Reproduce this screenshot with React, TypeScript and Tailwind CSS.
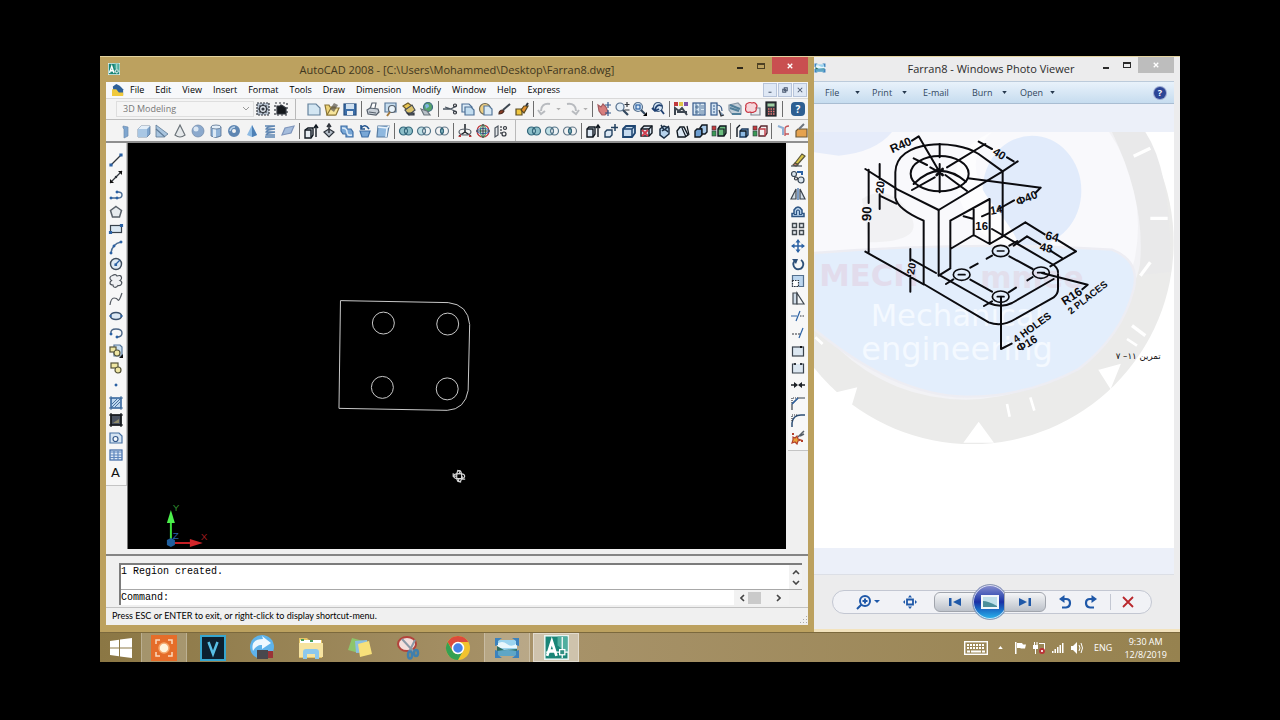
import type { ReactNode } from "react";

const ink = "#30353c";
const blue = "#2c62a4";
const pale = "#bcd6ef";

type Item = string;

function Svg({ children, size = "size-4" }: { children: ReactNode; size?: string }) {
  return (
    <svg viewBox="0 0 16 16" className={`${size} shrink-0`} fill="none" stroke={ink} strokeWidth="1.2" aria-hidden="true">
      {children}
    </svg>
  );
}

const cube = (
  <>
    <path d="M2 6 L5 3 H14 V11 L11 14 H2Z" fill="#7fa6cf" stroke="#55708f" strokeWidth=".7" />
    <path d="M2 6 H11 V14 H2Z" fill="#a9c7e4" stroke="none" />
    <path d="M2 6 L5 3 H14 L11 6Z" fill="#e3eef8" stroke="none" />
  </>
);
const faceCube = (
  <>
    <path d="M2 6 L5 3 H13 V10 L10 13 H2Z" fill="#dce8f4" stroke="#101820" strokeWidth="1.4" />
    <path d="M2 6 H10 V13 M10 6 L13 3" stroke="#101820" strokeWidth="1.4" />
  </>
);

const art: Record<string, ReactNode> = {
  "Workspace settings": (
    <>
      <rect x="2" y="2" width="12" height="12" fill="#b9c4d1" strokeDasharray="2 1" />
      <circle cx="8" cy="8" r="3.5" fill="#dfe6ee" />
      <circle cx="8" cy="8" r="1" fill={ink} />
      <path d="M8 3v2M8 11v2M3 8h2M11 8h2M4.500 4.500l1 1M10.500 10.500l1 1M11.500 4.500l-1 1M5.500 10.500l-1 1" />
    </>
  ),
  "My workspace": (
    <>
      <rect x="2" y="2" width="12" height="12" strokeDasharray="2 2" />
      <path d="M4 13V5h3l1-1 2 1 3 2v6Z" fill="#15181c" />
    </>
  ),
  New: <path d="M2 3h8l4 4v7H2Z" fill="#d3e6f2" stroke="#65829c" />,
  Open: (
    <>
      <path d="M1 4h4l1 2h5v8H3Z" fill="#eed477" stroke="#8a7434" />
      <path d="M3 14 7 7h8l-3 7Z" fill="#f7e59c" stroke="#8a7434" />
      <path d="M6 8 10 2l4 2-4 7Z" fill="#5a564c" stroke="none" opacity=".7" />
    </>
  ),
  Save: (
    <>
      <rect x="2" y="3" width="12" height="11" fill="#3c6ea8" stroke="#274f80" />
      <rect x="4" y="3" width="8" height="5" fill="#cfe0f0" stroke="none" />
      <rect x="5" y="10" width="6" height="4" fill="#e8eef4" stroke="none" />
    </>
  ),
  Plot: (
    <>
      <path d="M5 8 7 2h4l-1 5" fill="#fff" stroke="#56606c" />
      <path d="M2 9l3-2 8 1 1 3-3 3-8-1Z" fill="#c9d0d8" stroke="#56606c" />
      <path d="M4 11l7 1" stroke="#56606c" />
    </>
  ),
  "Plot preview": (
    <>
      <path d="M2 2h11v9H2Z" fill="#c8deef" stroke="#56779a" />
      <circle cx="9" cy="8" r="3.500" fill="#eaf4fb" stroke="#56606c" />
      <path d="M7 11 4 15" stroke="#a2793d" strokeWidth="2" />
    </>
  ),
  Publish: (
    <>
      <path d="M2 5l5-3 4 3-5 4Z" fill="#e9c552" stroke="#6d5b2a" />
      <path d="M4 9 11 4l3 5-6 5Z" fill="#d9c16a" stroke="#4a4f55" />
      <path d="M6 12h7v2H8Z" fill="#56606c" />
    </>
  ),
  "3D DWF": (
    <>
      <circle cx="9" cy="6" r="4.500" fill="#56a36c" stroke="#3d6a83" />
      <path d="M6 4c2-2 4-1 4 1s-2 1-3 3Z" fill="#7fb5e4" stroke="none" />
      <path d="M2 8l6 2 3 4H5Z" fill="#b8c1c8" stroke="#6b747c" />
    </>
  ),
  Cut: (
    <>
      <path d="M1 8h8M9 8l5-3M9 8l5 3M3 6l6 2" stroke="#4b5560" strokeWidth="1.300" />
      <circle cx="13" cy="4.500" r="1.500" />
      <circle cx="13" cy="11.500" r="1.500" />
    </>
  ),
  Copy: (
    <>
      <path d="M2 3h7l3 3v5H2Z" fill="#dcebf6" stroke="#4e7197" />
      <path d="M5 6h6l3 3v5H5Z" fill="#c1dcef" stroke="#4e7197" />
    </>
  ),
  Paste: (
    <>
      <circle cx="7" cy="8" r="5.500" fill="#efcf82" stroke="#6d6650" />
      <path d="M6 5h5l3 3v6H6Z" fill="#d9e9f4" stroke="#56779a" />
    </>
  ),
  "Match properties": (
    <>
      <path d="M3 13c0-3 2-4 4-4l1 1c-1 2-2 3-5 3Z" fill="#8c3d25" stroke="#4b2a1e" />
      <path d="M7 9 14 3" stroke="#3d4650" strokeWidth="2" />
    </>
  ),
  "Block editor": (
    <>
      <path d="M2 8h6v6H2Z" fill="#f0c740" stroke="#5a4a20" />
      <path d="M7 9 10 5h4l-4 7Z" fill="#e4912f" stroke="#5a4a20" />
      <path d="M12 5l2-3" strokeWidth="2" />
    </>
  ),
  Undo: <path d="M13 3C7 2 4 5 4 10M1 9l3 4 4-3" stroke="#b8bbbf" strokeWidth="2" />,
  Redo: <path d="M3 3c6-1 9 2 9 7M15 9l-3 4-4-3" stroke="#b8bbbf" strokeWidth="2" />,
  "Pan realtime": (
    <>
      <path d="M2 4l3 2 2-3 3 3 2 5-3 3H6L3 10Z" fill="#d77e7d" stroke="#a35a5e" />
      <path d="M12 1v6M9 4h6M12 9v6M9 12h6" stroke="#35598a" />
    </>
  ),
  "Zoom realtime": (
    <>
      <circle cx="6" cy="6" r="4" fill="#e4eff8" stroke="#58728f" />
      <path d="M9 9l5 5" stroke="#33485f" strokeWidth="2.200" />
      <path d="M13 1v5M10.500 3.500h5M10.500 9h5" stroke="#30353c" />
    </>
  ),
  "Zoom window": (
    <>
      <circle cx="6" cy="6" r="4.500" fill="#d4e5f4" stroke="#58728f" />
      <rect x="4" y="4" width="4" height="4" stroke={blue} />
      <path d="M9 9l4 4" stroke="#33485f" strokeWidth="2.200" />
      <path d="M11 15h4v-4Z" fill="#000" stroke="none" />
    </>
  ),
  "Zoom previous": (
    <>
      <circle cx="8" cy="6" r="4.500" fill="#d4e5f4" stroke="#3a577a" />
      <path d="M11 9l3 4M12 5C8 3 6 5 5 9M2 7l3 3 4-2" stroke="#1e3f70" strokeWidth="1.800" />
    </>
  ),
  Properties: (
    <>
      <rect x="1" y="1" width="4" height="4" fill="#c2393c" stroke="none" />
      <rect x="6" y="1" width="4" height="4" fill="#dfc449" stroke="none" />
      <rect x="11" y="1" width="4" height="4" fill="#7e4fa6" stroke="none" />
      <path d="M2 14V7l4 3 3-3 5 7M4 11h10" stroke="#3d4650" strokeWidth="2" />
    </>
  ),
  DesignCenter: (
    <>
      <rect x="2" y="2" width="12" height="12" fill="#d9e8f4" stroke="#35598a" />
      <path d="M5 2v12M9 2v12M5 5h2v2H5ZM10 5h3M10 7h3M5 10h2v2H5ZM10 10h3M10 12h3" stroke="#4b6d94" strokeWidth=".9" />
    </>
  ),
  "Tool palettes": (
    <>
      <rect x="2" y="2" width="6" height="12" fill="#cfe0f0" stroke="#35598a" />
      <path d="M4 5h2M4 8h2M4 11h2M8 4c4 0 5 3 5 6" stroke="#35598a" />
      <path d="M10 9l2 6 3-1" fill="#7f98b4" stroke="#30353c" />
    </>
  ),
  "Sheet set manager": (
    <>
      <path d="M2 4l9-2 3 3v8H5L2 9Z" fill="#c2cfd9" stroke="#8a99a7" />
      <path d="M3 7l9 3M3 4l10 4M5 13h9" stroke="#507f9a" strokeWidth="2" />
    </>
  ),
  "Markup set manager": (
    <>
      <path d="M6 7h9v7H6Z" fill="#e8ebee" stroke="#7c858f" />
      <path d="M3 2q2-1 4 0 3-1 4 1 2 2 0 4 1 3-2 4-2 1-4 0-3 1-4-1-1-2 0-4-1-3 2-4Z" fill="#f7d6da" stroke="#c8323f" />
    </>
  ),
  QuickCalc: (
    <>
      <rect x="3" y="1" width="10" height="14" fill="#35393f" stroke="#1d2024" />
      <rect x="4.500" y="2.500" width="7" height="3" fill="#9fd0a3" stroke="none" />
      <path d="M5 8h7M5 10.500h7M5 13h7" stroke="#e87573" strokeWidth="1.300" strokeDasharray="1.500 1" />
    </>
  ),
  Box: cube,
  Polysolid: <path d="M5 3l5 1v9l-4 2V6L5 5Z" fill="#7fa6cf" stroke="#6d8db0" strokeWidth=".7" />,
  Wedge: (
    <>
      <path d="M2 2l12 9-4 3H2Z" fill="#a9c5df" stroke="#5e7a96" strokeWidth=".8" />
      <path d="M2 6l9 8" stroke="#5e7a96" />
    </>
  ),
  Cone: <path d="M8 2 13 12q-5 4-10 0Z" fill="#e5e8ea" stroke="#6a7278" />,
  Sphere: (
    <>
      <circle cx="8" cy="8" r="6" fill="#8ba9cd" stroke="#6f87a6" strokeWidth=".7" />
      <circle cx="6" cy="6" r="2.500" fill="#dbe7f3" stroke="none" />
    </>
  ),
  Cylinder: (
    <>
      <path d="M3 4v9q5 3 10 0V4Z" fill="#8fb2d7" stroke="#55708f" strokeWidth=".8" />
      <path d="M5 5v9h3V5Z" fill="#dce9f5" stroke="none" />
      <ellipse cx="8" cy="4" rx="5" ry="2" fill="#e3eef8" stroke="#55708f" strokeWidth=".8" />
    </>
  ),
  Torus: (
    <>
      <circle cx="8" cy="8" r="4" stroke="#5f86b2" strokeWidth="4" />
      <path d="M4 8q1-4 5-4" stroke="#b9d2ea" strokeWidth="1.500" />
    </>
  ),
  Pyramid: (
    <>
      <path d="M8 2 13 12 8 14 3 12Z" fill="#8ebbe3" stroke="none" />
      <path d="M8 2v12l5-2Z" fill="#4d80b6" stroke="none" />
    </>
  ),
  Helix: <path d="M3 3h10q-9 1-9 3h9q-9 1-9 3h9q-9 1-9 3h9M3 14h10" stroke="#5f86b2" strokeWidth="1.300" />,
  "Planar surface": <path d="M2 12 5 5l9-2-3 7Z" fill="#a5bddd" stroke="#7f95bb" />,
  Extrude: (
    <>
      <path d="M2 7l3-2h5v7l-2 3H2Z" fill="#e5ebf1" stroke="#101820" strokeWidth="1.400" />
      <path d="M2 7h6v7M13 14V3M11 5l2-3 2 3" stroke="#101820" strokeWidth="1.400" />
    </>
  ),
  Presspull: (
    <>
      <path d="M3 9l5-3 5 3-5 5Z" fill="#b5bec8" stroke="#2c333b" />
      <path d="M8 10V2M6 4l2-3 2 3" strokeWidth="1.500" />
    </>
  ),
  Sweep: (
    <>
      <path d="M2 3h6v3h4l2 3v5H7v-3H4L2 8Z" fill="#79a7d6" stroke="#3f6fa6" />
      <path d="M3 5q5 0 5 4t5 3" stroke="#dcebf8" strokeWidth="1.500" />
    </>
  ),
  Revolve: (
    <>
      <path d="M3 8h10l-2 6H5Z" fill="#79a7d6" stroke="#3f6fa6" />
      <path d="M12 6Q8 0 4 5M4 2v4h4" stroke="#24558f" strokeWidth="1.600" />
    </>
  ),
  Loft: (
    <>
      <path d="M3 3h11l-2 11H2Z" fill="#8fb8df" stroke="#5a7da1" />
      <path d="M3 4l9 1 2-2M12 5l-1 9" stroke="#eaf3fb" strokeWidth="1.500" />
    </>
  ),
  Union: (
    <>
      <circle cx="5.500" cy="8" r="4" fill="#8dbfc9" stroke="#33677b" />
      <circle cx="10.500" cy="8" r="4" fill="#8dbfc9" stroke="#33677b" />
      <path d="M8 5q-3 3 0 6 3-3 0-6Z" fill="#b7dbe1" stroke="#33677b" />
    </>
  ),
  Subtract: (
    <>
      <circle cx="10.500" cy="8" r="4" fill="#eef2f4" stroke="#527488" />
      <circle cx="5.500" cy="8" r="4" fill="#bfe0e6" stroke="#527488" />
      <path d="M8 5q-3 3 0 6 3-3 0-6Z" fill="#f4f6f7" stroke="#527488" />
    </>
  ),
  Intersect: (
    <>
      <circle cx="5.500" cy="8" r="4" stroke="#64798a" />
      <circle cx="10.500" cy="8" r="4" stroke="#64798a" />
      <path d="M8 5q-3 3 0 6 3-3 0-6Z" fill="#8dbfc9" stroke="#33677b" />
    </>
  ),
  "3D move": (
    <>
      <path d="M8 9V1M8 9l6 4M8 9l-6 4" stroke="#1d2228" strokeWidth="1.500" />
      <ellipse cx="8" cy="9" rx="6" ry="3" stroke="#555d66" />
      <path d="M1 14l3-3v3ZM15 14l-3-3v3Z" fill="#c2393c" stroke="none" />
    </>
  ),
  "3D rotate": (
    <>
      <circle cx="8" cy="8" r="6" stroke="#c2393c" />
      <ellipse cx="8" cy="8" rx="2.500" ry="6" stroke="#3a9a56" />
      <ellipse cx="8" cy="8" rx="6" ry="2.500" stroke="#3563a5" />
      <path d="M8 1v14M1 8h14" stroke="#40474f" />
    </>
  ),
  "3D align": (
    <>
      <path d="M2 5l3-2v9l-3 2Z" fill="#e4e7ea" stroke="#4d555e" />
      <circle cx="12" cy="5" r="1.500" />
      <circle cx="11" cy="11" r="2" />
      <path d="M8 3v9" strokeDasharray="2 1" />
    </>
  ),
  "Extrude faces": (
    <>
      <path d="M2 6l2-2h6v7l-2 3H2Z" fill="#dce8f4" stroke="#101820" strokeWidth="1.400" />
      <path d="M2 6h6v8M13 14V3M11 5l2-3 2 3" stroke="#101820" strokeWidth="1.400" />
    </>
  ),
  "Move faces": (
    <>
      <path d="M2 9l2-2h5v5l-2 2H2Z" fill="#dce8f4" stroke="#22405f" strokeWidth="1.400" />
      <path d="M12 1v7M8 4.500h7" stroke="#22405f" strokeWidth="1.500" />
    </>
  ),
  "Offset faces": (
    <>
      <path d="M2 6L5 3 H14 V10 L11 14 H2Z" fill="#c6dbef" stroke="#1f4672" strokeWidth="1.800" />
      <path d="M2 6 H11 V14M11 6l3-3" stroke="#1f4672" strokeWidth="1.500" />
    </>
  ),
  "Delete faces": (
    <>
      {faceCube}
      <path d="M3 7l6 6M9 7l-6 6" stroke="#d23b4b" strokeWidth="1.800" />
    </>
  ),
  "Rotate faces": (
    <>
      <path d="M3 6l4-3 5 2v6l-5 4-4-3Z" fill="#b6d2ec" stroke="#1b2f45" strokeWidth="1.500" />
      <path d="M5 8q3-3 6 1M4 2l3 5 5-4" stroke="#1b2f45" strokeWidth="1.500" />
    </>
  ),
  "Taper faces": (
    <>
      <path d="M2 8l3-4h4l4 8-3 2H3Z" fill="#dce8f4" stroke="#101820" strokeWidth="1.400" />
      <path d="M7 5l4 9M12 3l2 9" stroke="#101820" />
    </>
  ),
  "Copy faces": (
    <>
      <path d="M2 8l2-2h5v6l-2 2H2Z" fill="#6d9ed1" stroke="#101820" strokeWidth="1.400" />
      <path d="M7 5l2-3h5v7l-2 2H9V6Z" fill="#a8c9e8" stroke="#101820" strokeWidth="1.400" />
    </>
  ),
  "Color faces": (
    <>
      <rect x="1" y="3" width="4" height="4" fill="#c2393c" stroke={ink} strokeWidth=".6" />
      <rect x="1" y="8" width="4" height="5" fill="#3a9a56" stroke={ink} strokeWidth=".6" />
      <path d="M7 6l2-3h6v7l-2 3H7Z" fill="#6bbd7e" stroke="#101820" strokeWidth="1.400" />
      <path d="M7 6h6v7" stroke="#101820" />
    </>
  ),
  "Copy edges": (
    <>
      <path d="M6 8l2-2h6v6l-2 2H6Z" fill="#8db9e2" stroke="#1d3a5c" strokeWidth="1.400" />
      <path d="M3 14V5l3-3M6 8h6v6" stroke="#101820" strokeWidth="1.400" />
    </>
  ),
  "Color edges": (
    <>
      <rect x="1" y="3" width="4" height="4" fill="#c2393c" stroke={ink} strokeWidth=".6" />
      <rect x="1" y="8" width="4" height="5" fill="#3a9a56" stroke={ink} strokeWidth=".6" />
      <path d="M7 6l2-3h6v7l-2 3H7Z" fill="#f4eff0" stroke="#5a2a30" strokeWidth="1.400" />
      <path d="M7 6h6v7" stroke="#c23b46" strokeWidth="1.400" />
    </>
  ),
  Imprint: (
    <>
      <path d="M3 3l5 2v7" stroke="#8eb0d4" strokeWidth="2" />
      <path d="M14 3q-4 0-4 3v7M10 11h4" stroke="#c2565a" strokeWidth="1.300" />
    </>
  ),
  Clean: (
    <>
      <path d="M3 8l2-2h9v8H3Z" fill="#e5a24e" stroke="#6d5a3a" />
      <path d="M6 6l5-5" stroke="#6d747c" strokeWidth="2" />
    </>
  ),
  Line: (
    <>
      <path d="M3 13 13 3" stroke={ink} />
      <path d="M2 12h2v2H2ZM12 2h2v2h-2Z" fill={blue} stroke={blue} />
    </>
  ),
  "Construction line": (
    <>
      <path d="M2 14 14 2" />
      <path d="M2 14v-4l4 4ZM14 2v4l-4-4Z" fill="#111" stroke="none" />
      <path d="M7.500 7.500h1v1h-1Z" fill="#111" />
    </>
  ),
  Polyline: (
    <>
      <path d="M3 12h7q4 0 4-3t-4-3" stroke="#4b6d94" strokeWidth="1.400" />
      <path d="M2 11h2v2H2ZM8 11h2v2H8ZM8 5h2v2H8Z" fill={blue} stroke={blue} strokeWidth=".6" />
    </>
  ),
  Polygon: <path d="M8 2.500l5.500 4-2 6.500h-7l-2-6.500Z" fill="#e7ebee" stroke="#59616a" strokeWidth="1.500" />,
  Rectangle: (
    <>
      <rect x="2.500" y="4.500" width="11" height="7" fill="#dbe8f3" stroke="#39424c" />
      <path d="M1.500 10.500h2v2h-2ZM12.500 3.500h2v2h-2Z" fill={blue} stroke={blue} />
    </>
  ),
  Arc: (
    <>
      <path d="M3 14Q4 5 13 3" stroke="#4b6d94" strokeWidth="1.400" />
      <path d="M2 13h2v2H2ZM5 6h2v2H5ZM12 2h2v2h-2Z" fill={blue} stroke={blue} strokeWidth=".6" />
    </>
  ),
  Circle: (
    <>
      <circle cx="8" cy="8" r="5.500" fill="#dfeaf4" stroke="#3e4c5c" strokeWidth="1.400" />
      <path d="M7.500 8.500 12 4" stroke={blue} />
      <path d="M7 8h1.500v1.500H7Z" fill={blue} stroke={blue} />
    </>
  ),
  "Revision cloud": (
    <path
      d="M4.500 2.500q3-2 4.500.5 4-1.500 4.500 1.500.5 2-1.500 3 2.500 1 1.500 3.500-1 2-3.500 1.500-1.500 2.500-4 1.500-1-.500-1-2-3 0-3-2 0-1.500 1.500-2.500-2-1-1.500-3 .5-1.500 2.500-2Z"
      fill="#f0f1f3"
      stroke="#4d535b"
    />
  ),
  Spline: <path d="M2 14q1-7 4-7t4 2 4-7" stroke="#555b63" />,
  Ellipse: (
    <>
      <ellipse cx="8" cy="8" rx="5.500" ry="3.500" fill="#dbe8f3" stroke="#39506c" strokeWidth="1.600" />
      <path d="M1.500 7h2v2h-2ZM12.500 7h2v2h-2Z" fill={blue} stroke="none" />
    </>
  ),
  "Ellipse arc": (
    <>
      <path d="M3 9q-1-5 5-5t6 4-5 4" stroke="#4c6686" strokeWidth="1.400" />
      <path d="M2 8h2v2H2ZM8 11h2v2H8Z" fill={blue} stroke={blue} strokeWidth=".6" />
    </>
  ),
  "Insert block": (
    <>
      <path d="M6 2h6l2 2v9H6Z" fill="#cbdff0" stroke="#56779a" />
      <rect x="2" y="4" width="6" height="5" fill="#efe6a2" stroke="#565438" />
      <circle cx="9" cy="10" r="3" fill="#efe6a2" stroke="#565438" />
      <path d="M11 15h4v-4Z" fill="#111" stroke="none" />
    </>
  ),
  "Make block": (
    <>
      <rect x="3" y="3" width="7" height="5" fill="#efe6a2" stroke="#565438" />
      <circle cx="10" cy="10" r="3" fill="#efe6a2" stroke="#565438" />
    </>
  ),
  Point: <path d="M7 7h2v2H7Z" fill={blue} stroke={blue} strokeWidth=".6" />,
  Hatch: (
    <>
      <rect x="3" y="3" width="10" height="10" fill={pale} stroke={blue} />
      <path d="M1 3h14M1 13h14M3 1v14M13 1v14M4 9l5-5M4 12l8-8M7 12l5-5" stroke="#3b6696" strokeWidth=".9" />
    </>
  ),
  Gradient: (
    <>
      <rect x="3" y="3" width="10" height="10" fill="#4a5260" stroke="#16191d" strokeWidth="1.500" />
      <path d="M1 3h14M1 13h14M3 1v14M13 1v14" stroke="#16191d" />
      <path d="M5 11h6V7Z" fill="#8f8b6b" stroke="none" />
    </>
  ),
  Region: (
    <>
      <path d="M2 3h9l3 3v7H2Z" fill="#d5e4f2" stroke="#4972a4" />
      <circle cx="7.500" cy="9" r="2.500" fill="#f5f9fc" stroke="#35598a" />
    </>
  ),
  Table: (
    <>
      <rect x="2" y="3" width="12" height="10" fill="#dce8f6" stroke="#3d68a5" />
      <path d="M2 5h12M2 8h12M2 10.500h12M6 4v9M10 4v9" stroke="#5e86bd" />
    </>
  ),
  Erase: (
    <>
      <path d="M5 11 12 2l3 2-7 8Z" fill="#d8c64a" stroke="#5b563a" />
      <path d="M5 11l3 2-2 1-3-1Z" fill="#d67b7b" stroke="#5b563a" />
      <path d="M1 14h11" stroke="#494f57" />
    </>
  ),
  "Copy object": (
    <>
      <circle cx="4" cy="5" r="2.500" fill="#dbe6ef" stroke="#3a4755" />
      <circle cx="11" cy="11" r="3" fill="#dbe6ef" stroke="#3a4755" />
      <circle cx="6" cy="9.500" r="1.500" />
      <path d="M7 3h5v3" stroke={blue} strokeWidth="2" />
    </>
  ),
  Mirror: (
    <>
      <path d="M6 3v10H1ZM10 3v10h5Z" fill="#d2dde7" stroke="#3c444d" />
      <path d="M8 2v12" stroke={blue} />
    </>
  ),
  Offset: (
    <>
      <path d="M2 12.500v-3h2V6q4-6 8 0v3.500h2v3Z" fill={pale} stroke="#2c5482" strokeWidth="1.500" />
      <path d="M4 10.500h2.500V7q1.500-2 3 0v3.500H12" stroke="#2c5482" />
    </>
  ),
  Array: <path d="M2.500 2.500h4v4h-4ZM9.500 2.500h4v4h-4ZM2.500 9.500h4v4h-4ZM9.500 9.500h4v4h-4Z" fill="#e8edf1" stroke="#42494f" strokeWidth="1.400" />,
  Move: (
    <>
      <path d="M8 2v12M2 8h12" stroke={blue} strokeWidth="1.500" />
      <path d="M8 1l2.500 3.500h-5ZM8 15l2.500-3.500h-5ZM1 8l3.500-2.500v5ZM15 8l-3.500-2.500v5Z" fill={blue} stroke="none" />
    </>
  ),
  Rotate: (
    <>
      <path d="M4.500 5A5 5 0 1 0 11 4" stroke="#2d4f78" strokeWidth="1.900" />
      <path d="M2 3h6L6 8Z" fill="#2d4f78" stroke="none" />
    </>
  ),
  Scale: (
    <>
      <path d="M2.500 2.500h11v11h-11Z" fill={pale} stroke="#54708f" />
      <path d="M2.500 7.500h6v6h-6Z" fill="#fff" strokeDasharray="1.500 1" />
    </>
  ),
  Stretch: (
    <>
      <path d="M3 3h4v11H3Z" fill="#cfdce8" stroke="#3f474f" />
      <path d="M7 3l7 11H7Z" fill="#f2f5f7" stroke="#3f474f" />
    </>
  ),
  Trim: (
    <>
      <path d="M1 8h6M10 3 6 13" stroke={blue} />
      <path d="M10 8h5" strokeDasharray="1.500 1" />
    </>
  ),
  Extend: (
    <>
      <path d="M2 9h8" strokeDasharray="2 1" />
      <path d="M13 3 9 13" stroke={blue} />
    </>
  ),
  "Break at point": (
    <>
      <rect x="2.500" y="4" width="11" height="9" fill="#dce7f1" stroke="#39424c" />
      <path d="M10 3h2v2h-2Z" fill="#111" stroke="none" />
    </>
  ),
  Break: (
    <>
      <path d="M5 4H2.500v9h11V4H11" fill="#dce7f1" stroke="#39424c" />
      <path d="M4 3h2v2H4ZM10 3h2v2h-2Z" fill={ink} stroke="none" />
    </>
  ),
  Join: (
    <>
      <path d="M1 8h4M11 8h4" stroke="#1c2025" strokeWidth="1.500" />
      <path d="M4 5l4 3-4 3ZM12 5 8 8l4 3Z" fill="#1c2025" stroke="none" />
    </>
  ),
  Chamfer: (
    <>
      <path d="M2 15V9l6-6h7" stroke="#39424c" />
      <path d="M2 8V3h6" strokeDasharray="1 1" />
      <path d="M2 9l6-6" stroke={blue} strokeWidth="1.500" />
    </>
  ),
  Fillet: (
    <>
      <path d="M2 15v-4q1-8 9-8h4" stroke="#2c4d74" strokeWidth="1.500" />
      <path d="M2 9V3h6" strokeDasharray="1 1" />
    </>
  ),
  Explode: (
    <>
      <path d="M3 8l2 1 2-2 1 3 3 1-3 1-1 3-2-2-3 1 1-3Z" fill="#e9a23a" stroke="#b4402b" />
      <path d="M8 8l6-6M10 7l4-2" stroke="#58606a" strokeWidth="1.500" />
      <path d="M2 4h2v2H2ZM11 11h2v2h-2Z" fill="#b4402b" stroke="none" />
    </>
  ),
};

function Tool({ name, className = "w-[18px]" }: { name: string; className?: string }) {
  return (
    <button type="button" aria-label={name} title={name} className={`flex h-full shrink-0 items-center justify-center ${className}`}>
      {name === "Multiline text" ? <span className="font-['DejaVu_Sans'] text-[13px] leading-none text-[#111]">A</span> : <Svg>{art[name]}</Svg>}
    </button>
  );
}

function ToolRow({ items }: { items: Item[] }) {
  return (
    <>
      {items.map((name, i) => {
        if (name === "|") return <span key={i} className="mx-[2px] h-4 w-px shrink-0 bg-[#6d6d6d]" />;
        if (name === "||") return <span key={i} className="ml-[5px] mr-[9px] h-full w-px shrink-0 bg-[#b9b9b9]" />;
        if (name === "v")
          return (
            <button key={i} type="button" aria-label="History" className="flex w-[9px] shrink-0 justify-center text-[#b0b0b0]">
              <svg viewBox="0 0 6 4" className="h-[3px] w-[5px]" fill="currentColor" aria-hidden="true">
                <path d="M0 0h6L3 3Z" />
              </svg>
            </button>
          );
        return <Tool key={i} name={name} />;
      })}
    </>
  );
}

const standard: Item[] = [
  "Workspace settings", "My workspace", "||", "New", "Open", "Save", "|", "Plot", "Plot preview", "Publish", "3D DWF", "|",
  "Cut", "Copy", "Paste", "Match properties", "Block editor", "|", "Undo", "v", "Redo", "v", "|",
  "Pan realtime", "Zoom realtime", "Zoom window", "Zoom previous", "|",
  "Properties", "DesignCenter", "Tool palettes", "Sheet set manager", "Markup set manager", "QuickCalc", "|",
];

const modeling: Item[] = [
  "Polysolid", "Box", "Wedge", "Cone", "Sphere", "Cylinder", "Torus", "Pyramid", "Helix", "Planar surface", "|",
  "Extrude", "Presspull", "Sweep", "Revolve", "Loft", "|", "Union", "Subtract", "Intersect", "|",
  "3D move", "3D rotate", "3D align", "||", "Union", "Subtract", "Intersect", "|",
  "Extrude faces", "Move faces", "Offset faces", "Delete faces", "Rotate faces", "Taper faces", "Copy faces", "Color faces", "|",
  "Copy edges", "Color edges", "|", "Imprint", "Clean",
];

const drawTools = [
  "Line", "Construction line", "Polyline", "Polygon", "Rectangle", "Arc", "Circle", "Revision cloud", "Spline", "Ellipse",
  "Ellipse arc", "Insert block", "Make block", "Point", "Hatch", "Gradient", "Region", "Table", "Multiline text",
];

const modifyTools = [
  "Erase", "Copy object", "Mirror", "Offset", "Array", "Move", "Rotate", "Scale", "Stretch", "Trim", "Extend",
  "Break at point", "Break", "Join", "Chamfer", "Fillet", "Explode",
];

const menus = ["File", "Edit", "View", "Insert", "Format", "Tools", "Draw", "Dimension", "Modify", "Window", "Help", "Express"];

function AcadLogo({ className }: { className: string }) {
  return (
    <svg viewBox="0 0 24 24" className={className} fill="none" aria-hidden="true">
      <rect width="24" height="24" fill="#e9f4f1" />
      <rect x="1.500" y="1.500" width="21" height="21" fill="#198577" />
      <path d="M13 1.500h9.500V17L13 10Z" fill="#4fae9f" />
      <path d="M3 20 7.500 6 12 20M4.500 15h6.500" stroke="#fff" strokeWidth="2.600" />
      <path d="M17.500 2v20M2 16.500h21" stroke="#fff" strokeWidth="1.200" />
      <rect x="15" y="14" width="5" height="5" fill="#318f83" stroke="#fff" strokeWidth="1.200" />
    </svg>
  );
}

function PhotoLogo({ className }: { className: string }) {
  return (
    <svg viewBox="0 0 26 22" className={className} aria-hidden="true">
      <rect x="3" y="3" width="20" height="16" fill="#9cd4ef" />
      <path d="M3 7q5-4 10 0t10-1v5H3Z" fill="#e9f7fc" />
      <path d="M3 9l7 4 13-1v3H3Z" fill="#2d6d5f" />
      <path d="M3 14q10-2 20 0v5H3Z" fill="#5fa6c6" />
      <path d="M1 1h7L4 4v4L1 9ZM25 1h-7l4 3v4l3 1ZM1 21h7l-4-3v-4l-3-1ZM25 21h-7l4-3v-4l3-1Z" fill="#3c82bd" />
    </svg>
  );
}

function Drawing() {
  return (
    <svg viewBox="127 143 658 407" preserveAspectRatio="xMinYMax meet" className="size-full" fill="none" role="img" aria-label="Model space">
      <g stroke="#c9c9c9" strokeWidth="1">
        <path d="M340 301 448 303Q468 305 469.500 325L468 391Q465 410 447 411L338.500 409Z" />
        <circle cx="383" cy="323.500" r="11" />
        <circle cx="447.500" cy="324.500" r="11" />
        <circle cx="382" cy="388" r="11" />
        <circle cx="447" cy="389.500" r="11" />
      </g>
      <g stroke="#d8d8d8" strokeWidth="1.200">
        <ellipse cx="459" cy="477" rx="5.500" ry="2.500" />
        <ellipse cx="459" cy="477" rx="2.500" ry="5.500" />
        <path d="M453 474v3h3M462 477v3h3M457 471l3 1-1 3M461 483l-3-1 1-3" />
      </g>
      <path d="M170 543V520" stroke="#3ce03c" strokeWidth="2" />
      <path d="M170 511l4 13h-8Z" fill="#4cf04c" />
      <path d="M171 544h20" stroke="#c41f25" strokeWidth="2" />
      <path d="M202 544l-13-4v8Z" fill="#d3262b" />
      <path d="M166 541l4-2 4 2v5l-4 2-4-2Z" fill="#1f5f9e" />
      <g fontFamily="Liberation Sans, sans-serif" fontSize="10">
        <text x="172" y="512" fill="#2f8a2f">Y</text>
        <text x="200" y="541" fill="#9a1b1f">X</text>
        <text x="172" y="540" fill="#2a63a8">Z</text>
      </g>
    </svg>
  );
}

function CadWindow() {
  return (
    <section aria-label="AutoCAD 2008" className="flex min-w-0 flex-col border-t border-[#e3d3a0] bg-[#bca15f] px-[6px] pb-[7px]">
      <header className="flex h-[25px] shrink-0 items-start">
        <AcadLogo className="ml-0.5 mt-1.5 size-3" />
        <h1 className="mt-[5px] flex-1 pl-16 text-center font-['Open_Sans',sans-serif] text-[11px] leading-4 text-[#3f3620]">
          AutoCAD 2008 - [C:\Users\Mohammed\Desktop\Farran8.dwg]
        </h1>
        <button type="button" aria-label="Minimize" className="flex h-[17px] w-5 items-center justify-center">
          <span className="mt-1 h-[2px] w-1.5 bg-[#2e281a]" />
        </button>
        <button type="button" aria-label="Maximize" className="flex h-[17px] w-[22px] items-center justify-center">
          <span className="h-1.5 w-2 border border-t-2 border-[#4d4124]" />
        </button>
        <button type="button" aria-label="Close" className="flex h-[17px] w-9 items-center justify-center bg-[#c94f50]">
          <svg viewBox="0 0 8 8" className="size-1.5" stroke="#fff" strokeWidth="1.800" aria-hidden="true">
            <path d="M1 1l6 6M7 1L1 7" />
          </svg>
        </button>
      </header>

      <div className="flex min-h-0 flex-1 flex-col overflow-hidden bg-[#f0f0f0]">
        <nav className="flex h-4 shrink-0 items-center bg-[#f7f8fa]">
          <svg viewBox="0 0 14 14" className="ml-1.5 mr-1.5 size-3 shrink-0" aria-hidden="true">
            <path d="M1 3 5 0l4 2 4 4v7H2Z" fill="#2f6199" />
            <path d="M0 6h5l3 4h5v4H0Z" fill="#f0c93c" />
          </svg>
          <div className="flex flex-1 items-center gap-[11px]">
            {menus.map((m) => (
              <button key={m} type="button" className="font-['Open_Sans',sans-serif] text-[9px] leading-4 text-black">
                {m}
              </button>
            ))}
          </div>
          {["M2 7h4", "M3 1h4v4H3ZM1 3h4v4H1Z", "M1 1l6 6M7 1L1 7"].map((d, i) => (
            <button
              key={d}
              type="button"
              aria-label={["Minimize drawing", "Restore drawing", "Close drawing"][i]}
              className="mr-px flex h-3.5 w-3.5 items-center justify-center border border-[#b7c4da] bg-[#dfe8f5]"
            >
              <svg viewBox="0 0 8 8" className="size-1.5" fill="none" stroke="#4a5870" strokeWidth="1.400" aria-hidden="true">
                <path d={d} />
              </svg>
            </button>
          ))}
        </nav>

        <div className="flex h-[22px] shrink-0 items-center overflow-hidden border-b border-t border-b-[#bdbdbd] border-t-[#d9d9d9] bg-[#f4f4f4]">
          <select
            aria-label="Workspace"
            defaultValue="3D Modeling"
            className="ml-[10px] h-4 w-[138px] shrink-0 appearance-none border border-[#dedede] bg-[#f5f5f5] px-1.5 font-['Open_Sans',sans-serif] text-[9px] leading-3 text-[#777]"
          >
            <option>3D Modeling</option>
          </select>
          <svg viewBox="0 0 8 6" className="-ml-3 mr-1 h-1.5 w-2 shrink-0" fill="none" stroke="#9a9a9a" aria-hidden="true">
            <path d="M1 1l3 3 3-3" />
          </svg>
          <ToolRow items={standard} />
          <button type="button" aria-label="Help topics" className="ml-1.5 flex size-3.5 shrink-0 items-center justify-center rounded-sm bg-[#2d5f92] font-['Open_Sans',sans-serif] text-[10px] font-bold leading-none text-white">
            ?
          </button>
        </div>

        <div className="flex h-[23px] shrink-0 items-center overflow-hidden border-b-2 border-[#8f8f8f] bg-[#f3f3f3] pl-[11px]">
          <ToolRow items={modeling} />
        </div>

        <div className="flex min-h-0 flex-1">
          <div className="w-[21px] shrink-0">
            <div className="grid h-[343px] auto-rows-fr border-b border-r border-[#c4c4c4] bg-[#f7f7f7] pb-1 pt-2">
              {drawTools.map((t) => (
                <Tool key={t} name={t} className="w-[19px]" />
              ))}
            </div>
          </div>
          <main className="min-w-0 flex-1 border-l border-[#777] bg-black">
            <Drawing />
          </main>
          <div className="w-[22px] shrink-0 pl-0.5">
            <div className="grid h-[308px] auto-rows-fr border-b border-[#c4c4c4] bg-[#f7f7f7] pb-1 pt-2">
              {modifyTools.map((t) => (
                <Tool key={t} name={t} className="w-5" />
              ))}
            </div>
          </div>
        </div>

        <section aria-label="Command line" className="mt-[5px] shrink-0 border-t-2 border-[#858585] pb-[2px] pl-[13px] pr-[6px] pt-[7px]">
          <div className="border-l-2 border-t-2 border-[#7c7c7c] font-['Liberation_Mono',monospace] text-[10px] text-black">
            <div className="flex h-[25px] border-b border-[#a8a8a8] bg-white">
              <p className="flex-1 leading-[14px]">1 Region created.</p>
              <div className="flex w-[13px] flex-col justify-around bg-[#f2f2f2] py-0.5">
                {["M1 4l3-3 3 3", "M1 1l3 3 3-3"].map((d, i) => (
                  <button key={d} type="button" aria-label={i ? "Scroll down" : "Scroll up"} className="flex justify-center">
                    <svg viewBox="0 0 8 5" className="h-[5px] w-2" fill="none" stroke="#444" strokeWidth="1.600" aria-hidden="true">
                      <path d={d} />
                    </svg>
                  </button>
                ))}
              </div>
            </div>
            <div className="flex h-[15px] items-center bg-white">
              <label htmlFor="command">Command:</label>
              <input id="command" className="h-3 min-w-0 flex-1 bg-white outline-none" />
              <div className="flex h-full w-[55px] items-center justify-between bg-[#f2f2f2] pl-1.5 pr-2">
                <button type="button" aria-label="Scroll left">
                  <svg viewBox="0 0 5 8" className="h-2 w-[5px]" fill="none" stroke="#444" strokeWidth="1.600" aria-hidden="true">
                    <path d="M4 1L1 4l3 3" />
                  </svg>
                </button>
                <span className="mr-3 h-3 w-[13px] bg-[#cacaca]" />
                <button type="button" aria-label="Scroll right">
                  <svg viewBox="0 0 5 8" className="h-2 w-[5px]" fill="none" stroke="#444" strokeWidth="1.600" aria-hidden="true">
                    <path d="M1 1l3 3-3 3" />
                  </svg>
                </button>
              </div>
              <span className="h-full w-[13px] bg-[#f0f0f0]" />
            </div>
          </div>
        </section>

        <footer className="flex h-[18px] shrink-0 items-center justify-between border-t border-[#c2c2c2] pb-px pl-1.5 font-['Lato',sans-serif] text-[9px] text-black">
          <span>Press ESC or ENTER to exit, or right-click to display shortcut-menu.</span>
          <svg viewBox="0 0 8 8" className="mt-2 size-2" fill="#aaa" aria-hidden="true">
            <path d="M6 0h1v1H6ZM6 3h1v1H6ZM6 6h1v1H6ZM3 3h1v1H3ZM3 6h1v1H3ZM0 6h1v1H0Z" />
          </svg>
        </footer>
      </div>
    </section>
  );
}

function Sketch() {
  return (
    <svg viewBox="6 9 1080 1254" preserveAspectRatio="xMinYMin slice" className="block size-full" fill="none" role="img" aria-label="Farran8">
      <rect x="6" y="9" width="1080" height="1254" fill="#fff" />
      <circle cx="480" cy="340" r="605" fill="#ebebea" />
      <ellipse cx="460" cy="290" rx="538" ry="522" fill="#f2f2f5" />
      <ellipse cx="458" cy="290" rx="520" ry="508" fill="#f9f9fc" />
      <path d="M6 9H240Q190 70 80 80L6 70Z" fill="#e6ecfa" />
      <ellipse cx="660" cy="185" rx="148" ry="165" fill="#e1ebfb" />
      <path d="M540 9Q440 100 545 230T600 350Q480 330 440 200T540 9Z" fill="#fdfdfe" />
      <path d="M150 210Q230 160 290 250T170 340Z" fill="#f1f1f3" />
      <path d="M6 372Q480 335 900 362 985 395 965 480 930 620 800 720 640 805 460 803 250 800 6 600Z" fill="#e3eefc" stroke="#ededf3" strokeWidth="7" />
      <path d="M500 885l38 52h-76ZM130 780l-18 60-55-42ZM865 725l55-15-25 62ZM10 625l22 20M585 825l8 38M655 805l12 40M945 630l30 20" fill="#fff" stroke="#fff" strokeWidth="8" />
      <path d="M900 9h100q80 120 75 420l-95 10q30-200-80-430Z" fill="#e9e9ea" />
      <path d="M1015 268h52M965 82l50-24M960 590l40 30M985 440l30-40" stroke="#fff" strokeWidth="10" />
      <g fontFamily="DejaVu Sans, sans-serif">
        <text x="22" y="472" fontSize="92" fontWeight="700" fill="#e2dcec">MECH</text>
        <text x="505" y="476" fontSize="90" fontWeight="700" fill="#e2dfec">mmee</text>
        <text x="176" y="590" fontSize="92" fill="#f4f9ff">Mechanical</text>
        <text x="148" y="692" fontSize="96" fill="#f4f9ff">engineering</text>
      </g>
      <g stroke="#0b0b0f" strokeWidth="6" strokeLinecap="round" strokeLinejoin="round">
        <path d="M250 205V130C252 30 430 30 500 75L572 127V322M250 178 380 243 572 127M250 205Q255 240 335 275V465L530 580Q570 595 610 570L725 505Q738 495 738 480V435" />
        <ellipse cx="383" cy="134" rx="87" ry="53" />
        <path d="M305 165Q380 90 462 158M383 45V85M383 105V190M305 88l40 20M355 115l22 12M300 183l68-38M400 138l65 48M405 115 520 45M383 130 320 22 300 35M500 38l40 22M585 85l20 12M572 127l45-30" />
        <path d="M376 122l16 16M392 120l-18 18" strokeWidth="8" />
        <path d="M468 148l218 28M686 176l-16 16" />
        <path d="M380 243V437M415 275V415M415 275 533 210V345L572 322M485 240V318L533 345M485 318 415 360M455 262l30 8M510 262l20-9M560 240l46-26M540 300l180 105Q738 415 738 430" />
        <path d="M380 437 530 522Q568 538 600 522L725 450M380 440l35-22M572 322l68-42M605 350l40-28M640 280l58 36M740 335l52 32M645 322l40 24M715 365l35 22M792 367 715 412" />
        <path d="M170 122V222M170 282V370M160 120l92 58M160 368l175 98M203 105V150M203 196V240M203 200l50 24M295 360V395M295 440V488M300 392l72 40" />
        <g strokeWidth="5">
          <ellipse cx="566" cy="366" rx="25" ry="17" />
          <ellipse cx="449" cy="437" rx="25" ry="17" />
          <ellipse cx="687" cy="431" rx="25" ry="17" />
          <ellipse cx="566" cy="503" rx="25" ry="17" />
          <path d="M556 366h20M439 437h20M677 431h20M556 503h20" />
        </g>
        <path d="M592 382l70 38M475 452l65 36M540 380l-16 9M497 404l-22 12M424 451l-22 14M662 444l-16 10M612 476l-22 14M540 517l-24 14M592 350l24-14" />
        <path d="M567 503V660l32-16M690 432l137 35-16 14" />
      </g>
      <g fontFamily="Liberation Sans, sans-serif" fontSize="36" fontWeight="700" fill="#0b0b0f">
        <text transform="translate(241 73) rotate(-24)">R40</text>
        <text transform="translate(540 74) rotate(32)" fontSize="34">40</text>
        <text transform="translate(618 230) rotate(-22)" fontSize="34">Φ40</text>
        <text transform="translate(214 195) rotate(-84)" fontSize="34">20</text>
        <text transform="translate(177 277) rotate(-88)" fontSize="40">90</text>
        <text transform="translate(306 438) rotate(-80)" fontSize="32">20</text>
        <text transform="translate(490 303)" fontSize="34">16</text>
        <text transform="translate(536 257) rotate(-10)" fontSize="34">14</text>
        <text transform="translate(698 330) rotate(14)" fontSize="36">64</text>
        <text transform="translate(682 364) rotate(12)" fontSize="34">48</text>
        <text transform="translate(758 530) rotate(-33)">R16</text>
        <text transform="translate(777 557) rotate(-38)" fontSize="29">2 PLACES</text>
        <text transform="translate(613 643) rotate(-36)" fontSize="31">4 HOLES</text>
        <text transform="translate(622 670) rotate(-30)" fontSize="34">Φ16</text>
      </g>
      <text x="1046" y="690" direction="rtl" textAnchor="start" fontFamily="DejaVu Sans, sans-serif" fontSize="26" fill="#101010">
        تمرين ١١– ٧
      </text>
    </svg>
  );
}

function ViewerControls() {
  return (
    <div className="flex h-[54px] shrink-0 items-center px-[18px] pr-7">
      <div className="flex h-6 flex-1 items-center rounded-full border border-[#c3c7d2] bg-[#f1f2f6] text-[#1f58a8]">
        <button type="button" aria-label="Change the display size" className="ml-[23px] flex w-6 items-center gap-0.5">
          <svg viewBox="0 0 16 16" className="size-4" fill="none" stroke="currentColor" strokeWidth="2" aria-hidden="true">
            <circle cx="9" cy="7" r="5" />
            <path d="M5.500 10.500 1 15M9 4.500v5M6.500 7h5" />
          </svg>
          <svg viewBox="0 0 6 4" className="h-1 w-1.5 shrink-0" fill="currentColor" aria-hidden="true">
            <path d="M0 0h6L3 3Z" />
          </svg>
        </button>
        <button type="button" aria-label="Actual size" className="ml-[22px]">
          <svg viewBox="0 0 16 16" className="size-4" fill="currentColor" aria-hidden="true">
            <path d="M5 5.500h6v5H5Z" fill="none" stroke="currentColor" strokeWidth="1.800" />
            <path d="M8 1l2 2.500H6ZM8 15l2-2.500H6ZM1 8l2-2v4ZM15 8l-2-2v4Z" />
          </svg>
        </button>
        <div className="ml-4 flex h-5 items-center">
          <button type="button" aria-label="Previous" className="flex h-5 w-[42px] items-center justify-center rounded-l-md border border-[#a1a5ad] bg-linear-to-b from-[#f5f6f8] to-[#bdc2ca]">
            <svg viewBox="0 0 12 10" className="h-2.5 w-3" fill="currentColor" aria-hidden="true">
              <path d="M0 1h2.500v8H0ZM12 1v8L4 5Z" />
            </svg>
          </button>
          <button type="button" aria-label="Play slide show" className="-mx-1 flex size-9 items-center justify-center rounded-full border border-[#8d99b5] bg-linear-to-b from-[#8b90cf] via-[#1b2fa5] to-[#2fb6ee] ring-1 ring-inset ring-white/70">
            <svg viewBox="0 0 18 14" className="h-3.5 w-[18px]" aria-hidden="true">
              <rect x="1" y="1" width="16" height="12" fill="#bfe0ea" stroke="#f2f6fa" strokeWidth="2" />
              <path d="M2 6q5 0 14 5v1H2Z" fill="#4b8f9b" />
            </svg>
          </button>
          <button type="button" aria-label="Next" className="flex h-5 w-[42px] items-center justify-center rounded-r-md border border-[#a1a5ad] bg-linear-to-b from-[#f5f6f8] to-[#bdc2ca]">
            <svg viewBox="0 0 12 10" className="h-2.5 w-3" fill="currentColor" aria-hidden="true">
              <path d="M9.500 1H12v8H9.500ZM0 1v8l8-4Z" />
            </svg>
          </button>
        </div>
        <button type="button" aria-label="Rotate counterclockwise" className="ml-3">
          <svg viewBox="0 0 14 14" className="size-3.5" fill="none" stroke="currentColor" strokeWidth="2.200" aria-hidden="true">
            <path d="M5 4h3q4 0 4 4t-4 4.500H4" />
            <path d="M6.500 0v8L1 4Z" fill="currentColor" stroke="none" />
          </svg>
        </button>
        <button type="button" aria-label="Rotate clockwise" className="ml-3">
          <svg viewBox="0 0 14 14" className="size-3.5" fill="none" stroke="currentColor" strokeWidth="2.200" aria-hidden="true">
            <path d="M9 4H6Q2 4 2 8t4 4.500h4" />
            <path d="M7.500 0v8L13 4Z" fill="currentColor" stroke="none" />
          </svg>
        </button>
        <span className="ml-3 h-4 w-px bg-[#c3c7d2]" />
        <button type="button" aria-label="Delete" className="ml-[11px]">
          <svg viewBox="0 0 12 12" className="size-3" stroke="#b9272c" strokeWidth="1.800" aria-hidden="true">
            <path d="M1 1l10 10M11 1L1 11" />
          </svg>
        </button>
      </div>
    </div>
  );
}

function PhotoWindow() {
  return (
    <section aria-label="Windows Photo Viewer" className="flex min-w-0 flex-col border-b-[3px] border-t border-b-[#f3e3bd] border-t-[#e3d3a0] bg-[#ececed]">
      <header className="flex h-6 shrink-0 items-start">
        <PhotoLogo className="mt-1.5 h-2.5 w-3" />
        <h1 className="mt-1 flex-1 pl-[60px] text-center font-['Open_Sans',sans-serif] text-[11px] leading-4 text-[#2b2b2b]">Farran8 - Windows Photo Viewer</h1>
        <button type="button" aria-label="Minimize" className="flex h-4 w-5 items-center justify-center">
          <span className="mt-1.5 h-[2px] w-1.5 bg-[#2b2b2b]" />
        </button>
        <button type="button" aria-label="Maximize" className="flex h-4 w-[22px] items-center justify-center">
          <span className="h-1.5 w-2 border border-t-2 border-[#2b2b2b]" />
        </button>
        <button type="button" aria-label="Close" className="mr-1.5 flex h-4 w-9 items-center justify-center bg-[#bdbdbd]">
          <svg viewBox="0 0 8 8" className="size-1.5" stroke="#fff" strokeWidth="1.800" aria-hidden="true">
            <path d="M1 1l6 6M7 1L1 7" />
          </svg>
        </button>
      </header>
      <div className="mr-1.5 flex min-h-0 flex-1 flex-col">
        <nav className="flex h-[23px] shrink-0 items-center border-b border-t border-b-[#a9bdd2] border-t-[#bccbdb] bg-linear-to-b from-[#e9f2fb] to-[#c6dcef] pl-[11px] font-['Open_Sans',sans-serif] text-[9px] text-[#33475e]">
          {[
            ["File", "w-[47px]"],
            ["Print", "w-[51px]"],
            ["E-mail", "w-[49px]"],
            ["Burn", "w-12"],
            ["Open", "w-12"],
          ].map(([label, width]) => (
            <button key={label} type="button" className={`flex items-center justify-start ${width}`}>
              <span className="min-w-[30px] text-left">{label}</span>
              {label !== "E-mail" && (
                <svg viewBox="0 0 6 4" className="h-[3px] w-[5px]" fill="#26384d" aria-hidden="true">
                  <path d="M0 0h6L3 4Z" />
                </svg>
              )}
            </button>
          ))}
          <button type="button" aria-label="Help" className="ml-auto mr-2 flex size-3 items-center justify-center rounded-full bg-[#2c4596] text-[9px] font-bold leading-none text-white ring-1 ring-[#9aa7cf]">
            ?
          </button>
        </nav>
        <div className="flex min-h-0 flex-1 flex-col border-b border-[#dcdfe6] bg-[#ecf0f9] pb-[26px] pt-7">
          <div className="min-h-0 flex-1">
            <Sketch />
          </div>
        </div>
      </div>
      <ViewerControls />
    </section>
  );
}

const apps: { name: string; tile?: string; icon: ReactNode }[] = [
  {
    name: "Screen recorder",
    tile: "bg-white/20 border-x border-white/25",
    icon: (
      <svg viewBox="0 0 26 26" className="size-[26px]" fill="none" aria-hidden="true">
        <rect width="26" height="26" fill="#e56d2a" />
        <path d="M5 9V5h4M17 5h4v4M21 17v4h-4M9 21H5v-4" stroke="#fbd9bd" strokeWidth="1.500" />
        <circle cx="13" cy="13" r="5" fill="#fff3dc" stroke="#f5a76b" strokeWidth="1.500" />
      </svg>
    ),
  },
  {
    name: "Vegas",
    icon: (
      <svg viewBox="0 0 26 26" className="size-[26px]" fill="none" aria-hidden="true">
        <rect x="1" y="1" width="24" height="24" fill="#0c2030" stroke="#37a6cf" strokeWidth="2" />
        <path d="M8.500 7 13 19l4.500-12" stroke="#58bfe6" strokeWidth="2.500" />
      </svg>
    ),
  },
  {
    name: "Video recorder",
    icon: (
      <svg viewBox="0 0 26 26" className="size-[26px]" fill="none" aria-hidden="true">
        <circle cx="13" cy="12" r="12" fill="#5fb3ea" />
        <path d="M4 16Q1 4 14 4l-1-3 9 7-9 6v-4q-5-1-9 6Z" fill="#eef8ff" />
        <path d="M8 15h11v9H8Z" fill="#49484d" />
        <path d="M19 16h5v7h-5Z" fill="#9a3337" />
      </svg>
    ),
  },
  {
    name: "File Explorer",
    icon: (
      <svg viewBox="0 0 26 26" className="size-[26px]" fill="none" aria-hidden="true">
        <path d="M1 3h8l2 2h13v18H1Z" fill="#e6c566" />
        <path d="M2 5h21v4H2Z" fill="#fff" />
        <path d="M3 4h3v2H3ZM12 5h3v2h-3Z" fill="#46a05c" />
        <path d="M1 8h24v14H1Z" fill="#f6e3a0" />
        <path d="M5 24v-7q0-3 3-3h10q3 0 3 3v7h-4v-5H9v5Z" fill="#8cc8ec" />
      </svg>
    ),
  },
  {
    name: "Sticky Notes",
    icon: (
      <svg viewBox="0 0 26 26" className="size-[26px]" fill="none" aria-hidden="true">
        <path d="M5 3l11 3-4 12-11-3Z" fill="#8ec56b" />
        <path d="M8 6l12-1 1 12-12 1Z" fill="#8cbfe0" />
        <path d="M11 9l11-3 3 13-12 3Z" fill="#f7e07a" />
      </svg>
    ),
  },
  {
    name: "Snipping Tool",
    icon: (
      <svg viewBox="0 0 26 26" className="size-[26px]" fill="none" aria-hidden="true">
        <ellipse cx="11" cy="9" rx="9" ry="7" fill="#f3dfdc" stroke="#b3433b" strokeWidth="2" />
        <path d="M6 4l12 13M19 5l-6 12" stroke="#8b99a7" strokeWidth="2" />
        <ellipse cx="14" cy="20" rx="2" ry="3.500" stroke="#3f7fae" strokeWidth="2.500" />
        <ellipse cx="20" cy="18" rx="2" ry="3" stroke="#3f7fae" strokeWidth="2.500" />
      </svg>
    ),
  },
  {
    name: "Chrome",
    icon: (
      <svg viewBox="0 0 26 26" className="size-[26px]" fill="none" aria-hidden="true">
        <circle cx="13" cy="13" r="12" fill="#f2c32e" />
        <path d="M2.600 7A12 12 0 0 1 23.400 7H13a6 6 0 0 0-5.500 8Z" fill="#dc4a3c" />
        <path d="M2.600 7A12 12 0 0 0 13 25l5-9a6 6 0 0 1-10.500 0Z" fill="#35a053" />
        <circle cx="13" cy="13" r="5.500" fill="#4682e8" stroke="#fff" strokeWidth="1.500" />
      </svg>
    ),
  },
  { name: "Windows Photo Viewer", tile: "bg-white/20 border-x border-white/25", icon: <PhotoLogo className="h-[22px] w-[26px]" /> },
  { name: "AutoCAD 2008", tile: "bg-white/45 border border-white/40", icon: <AcadLogo className="size-[25px]" /> },
];

function Taskbar() {
  return (
    <footer className="flex h-[30px] shrink-0 items-stretch overflow-hidden border-t border-[#7b693d] bg-linear-to-r from-[#8b7744] via-[#a8936a] via-40% to-[#96824f]">
      <button type="button" aria-label="Start" className="flex w-[41px] items-center justify-center">
        <svg viewBox="0 0 22 20" className="h-5 w-[22px]" fill="#fff" aria-hidden="true">
          <path d="M0 3l9-1.300V9.500H0ZM10 1.500 22 0v9.500H10ZM0 10.500h9v7.800L0 17ZM10 10.500h12V20l-12-1.500Z" />
        </svg>
      </button>
      <nav aria-label="Applications" className="flex gap-[3px]">
        {apps.map((a) => (
          <button key={a.name} type="button" aria-label={a.name} className={`flex w-[46px] items-center justify-center ${a.tile ?? ""}`}>
            {a.icon}
          </button>
        ))}
      </nav>
      <div className="ml-auto flex items-center gap-[7px] pr-[13px] text-white">
        <svg viewBox="0 0 24 14" className="mr-[3px] h-3.5 w-6" fill="none" stroke="#fff" aria-hidden="true">
          <rect x=".7" y=".7" width="22.600" height="12.600" strokeWidth="1.400" />
          <path d="M3 4h18M3 7h18" strokeWidth="2" strokeDasharray="2 1" />
          <path d="M3 10.500h3M7 10.500h10M18 10.500h3" strokeWidth="1.800" />
        </svg>
        <svg viewBox="0 0 6 4" className="mr-1 h-[3px] w-[5px]" fill="#fff" aria-hidden="true">
          <path d="M0 4h6L3 0Z" />
        </svg>
        <svg viewBox="0 0 12 12" className="size-3" fill="#fff" aria-hidden="true">
          <path d="M1 0h1.500v12H1ZM3 1h5l1 1.500h3l-1 4H7L6 6H3Z" />
        </svg>
        <svg viewBox="0 0 12 12" className="size-3" fill="#fff" aria-hidden="true">
          <path d="M0 3h5v4H3v5H2V7H0ZM1 0h1v3H1ZM3.500 0h1v3h-1ZM6 1h6v8H7V8h4V2H6Z" />
          <circle cx="9" cy="9" r="3" fill="#bc3236" />
          <path d="M8 8l2 2M10 8l-2 2" stroke="#fff" strokeWidth=".8" />
        </svg>
        <svg viewBox="0 0 12 10" className="h-2.5 w-3" fill="#fff" aria-hidden="true">
          <path d="M0 8h1.500v2H0ZM2.500 6H4v4H2.500ZM5 4h1.500v6H5ZM7.500 2H9v8H7.500ZM10 0h1.500v10H10Z" />
        </svg>
        <svg viewBox="0 0 12 12" className="size-3" fill="#fff" aria-hidden="true">
          <path d="M0 4h2l4-4v12L2 8H0Z" />
          <path d="M8 3q2 3 0 6M10 1q3 5 0 10" fill="none" stroke="#fff" />
        </svg>
        <span className="ml-1 font-['Open_Sans',sans-serif] text-[9px]">ENG</span>
        <div className="ml-[5px] text-center font-['Open_Sans',sans-serif] text-[9px] leading-[13px]">
          <p>9:30 AM</p>
          <p>12/8/2019</p>
        </div>
      </div>
    </footer>
  );
}

export default function App() {
  return (
    <div className="flex h-screen flex-col bg-black px-[100px] pb-[58px] pt-14">
      <div className="grid min-h-0 flex-1 grid-cols-[minmax(0,714fr)_minmax(0,366fr)] grid-rows-[minmax(0,1fr)]">
        <CadWindow />
        <PhotoWindow />
      </div>
      <Taskbar />
    </div>
  );
}
